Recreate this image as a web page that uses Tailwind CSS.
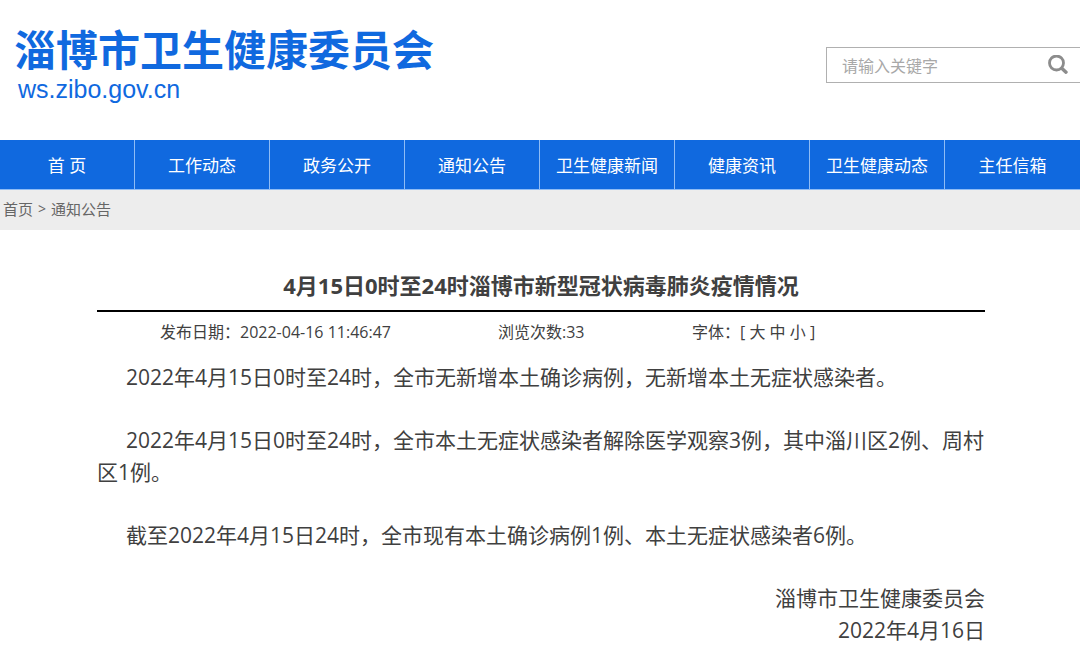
<!DOCTYPE html>
<html lang="zh-CN">
<head>
  <meta charset="UTF-8" />
  <meta name="viewport" content="width=device-width, initial-scale=1.0" />
  <title>淄博市卫生健康委员会</title>
  <script src="https://cdn.jsdelivr.net/npm/@tailwindcss/browser@4"></script>
</head>
<body class="bg-white text-[#404040] font-['Open_Sans','Noto_Sans_CJK_SC',sans-serif]">
  <!-- Header -->
  <header class="flex justify-between items-start h-[140px] pl-[14px]">
    <a href="#" class="block pt-6 text-[#1069df]">
      <h1 class="text-[42px] leading-[52px] font-bold">淄博市卫生健康委员会</h1>
      <p class="pl-1 text-[25px] leading-[26px] font-['Liberation_Sans',sans-serif]">ws.zibo.gov.cn</p>
    </a>
    <form class="flex items-center mt-[47px] w-[254px] h-9 border border-r-0 border-[#b0b0b0]">
      <input type="text" aria-label="搜索" placeholder="请输入关键字" class="flex-1 min-w-0 pl-[15px] pt-0.5 text-base outline-none placeholder:text-[#a8a8a8]" />
      <button type="button" aria-label="搜索" class="mr-3">
        <svg class="size-5" viewBox="0 0 20 20" fill="none" stroke="#8c8c8c" stroke-linecap="round">
          <circle cx="8.5" cy="8" r="7" stroke-width="2.8" />
          <path d="M14 13.4l4 3.8" stroke-width="3.4" />
        </svg>
      </button>
    </form>
  </header>
  <!-- Nav -->
  <nav class="grid grid-cols-8 h-[50px] border-b border-[#8fbcf5] bg-[#1069df] text-white text-[17px] text-center leading-[47px] divide-x divide-[#8fbcf5] *:pt-0.5">
    <a href="#">首 页</a>
    <a href="#">工作动态</a>
    <a href="#">政务公开</a>
    <a href="#">通知公告</a>
    <a href="#">卫生健康新闻</a>
    <a href="#">健康资讯</a>
    <a href="#">卫生健康动态</a>
    <a href="#">主任信箱</a>
  </nav>
  <!-- Breadcrumb -->
  <div class="flex items-center gap-[5px] h-10 pl-[3px] pb-0.5 bg-[#ededed] text-[15px] text-[#666]">
    <a href="#">首页</a>
    <span class="text-sm">&gt;</span>
    <a href="#">通知公告</a>
  </div>
  <!-- Article -->
  <main class="pl-[97px] pr-[95px] pt-[39px]">
    <h2 class="pb-[9px] border-b-2 border-black text-[22px] leading-8 font-bold text-center">4月15日0时至24时淄博市新型冠状病毒肺炎疫情情况</h2>
    <div class="flex pl-[63px] pt-2 text-base leading-6">
      <span class="w-[338px]">发布日期：2022-04-16 11:46:47</span>
      <span class="w-[194px]">浏览次数:33</span>
      <span>字体：[ <a href="#">大</a> <a href="#">中</a> <a href="#">小</a> ]</span>
    </div>
    <div class="pt-[17px] text-[21px] leading-8 space-y-[31px]">
      <p class="indent-[29px]">2022年4月15日0时至24时，全市无新增本土确诊病例，无新增本土无症状感染者。</p>
      <p class="indent-[29px]">2022年4月15日0时至24时，全市本土无症状感染者解除医学观察3例，其中淄川区2例、周村区1例。</p>
      <p class="indent-[29px]">截至2022年4月15日24时，全市现有本土确诊病例1例、本土无症状感染者6例。</p>
      <p class="text-right">淄博市卫生健康委员会<br />2022年4月16日</p>
    </div>
  </main>
</body>
</html>
